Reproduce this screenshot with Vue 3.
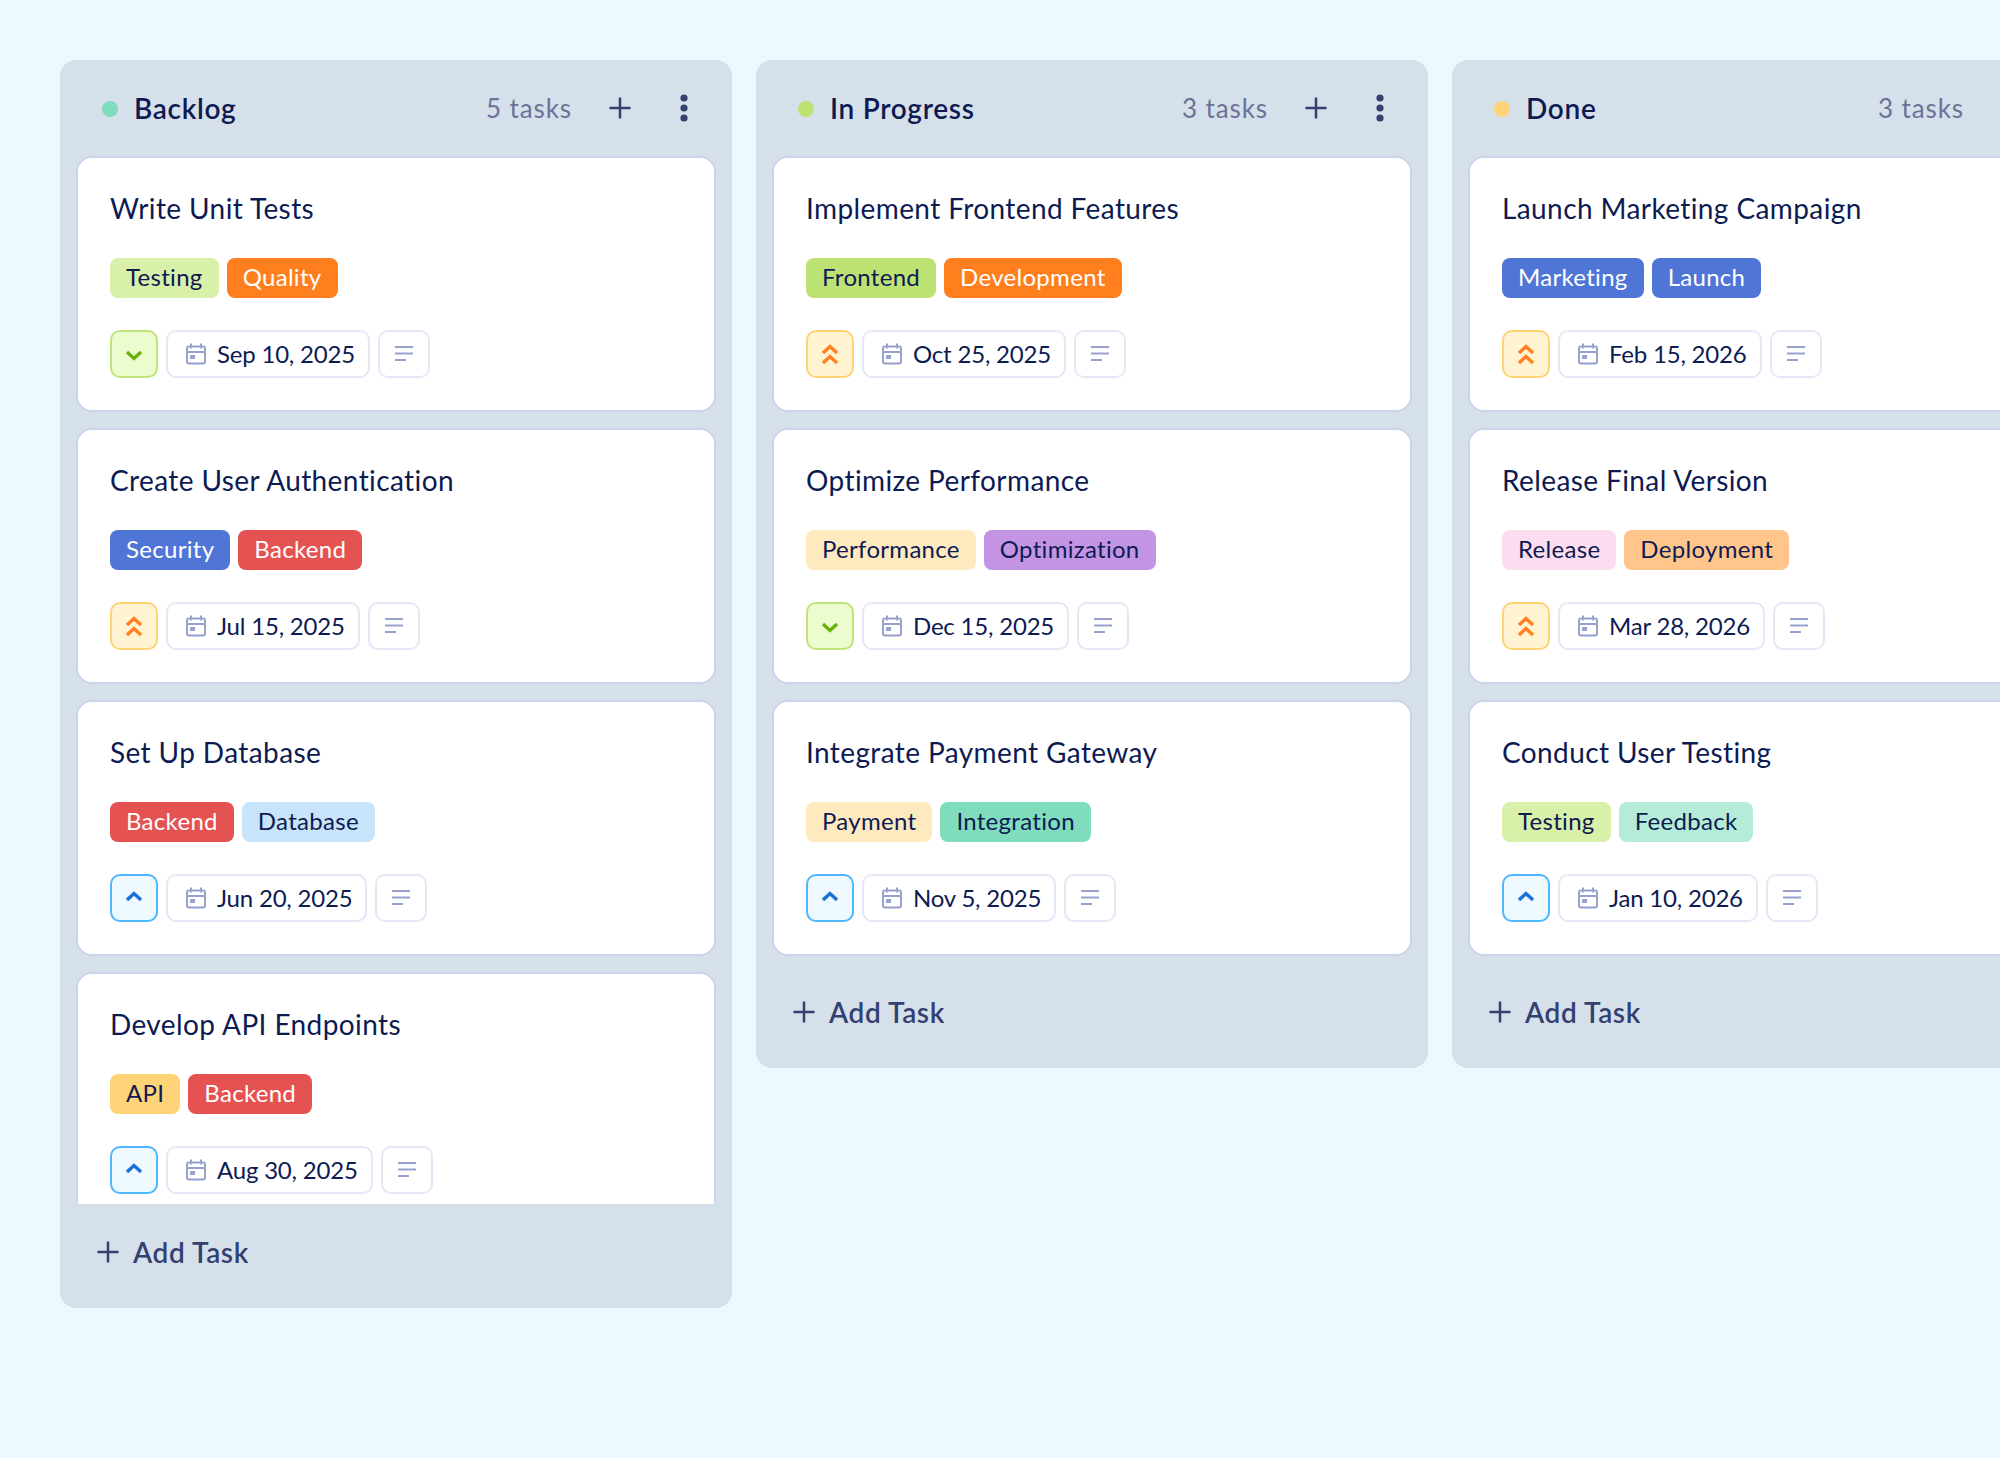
<script setup>
const columns = [
  {
    name: 'Backlog', dot: 'teal', count: '5 tasks',
    cards: [
      { title: 'Write Unit Tests', tags: [['Testing', 'lime'], ['Quality', 'orange']], priority: 'low', date: 'Sep 10, 2025' },
      { title: 'Create User Authentication', tags: [['Security', 'blue'], ['Backend', 'red']], priority: 'high', date: 'Jul 15, 2025' },
      { title: 'Set Up Database', tags: [['Backend', 'red'], ['Database', 'sky']], priority: 'medium', date: 'Jun 20, 2025' },
      { title: 'Develop API Endpoints', tags: [['API', 'amber'], ['Backend', 'red']], priority: 'medium', date: 'Aug 30, 2025' },
    ],
  },
  {
    name: 'In Progress', dot: 'green', count: '3 tasks',
    cards: [
      { title: 'Implement Frontend Features', tags: [['Frontend', 'green'], ['Development', 'orange']], priority: 'high', date: 'Oct 25, 2025' },
      { title: 'Optimize Performance', tags: [['Performance', 'cream'], ['Optimization', 'purple']], priority: 'low', date: 'Dec 15, 2025' },
      { title: 'Integrate Payment Gateway', tags: [['Payment', 'cream'], ['Integration', 'teal']], priority: 'medium', date: 'Nov 5, 2025' },
    ],
  },
  {
    name: 'Done', dot: 'amber', count: '3 tasks',
    cards: [
      { title: 'Launch Marketing Campaign', tags: [['Marketing', 'blue'], ['Launch', 'blue']], priority: 'high', date: 'Feb 15, 2026' },
      { title: 'Release Final Version', tags: [['Release', 'pink'], ['Deployment', 'peach']], priority: 'high', date: 'Mar 28, 2026' },
      { title: 'Conduct User Testing', tags: [['Testing', 'lime'], ['Feedback', 'mint']], priority: 'medium', date: 'Jan 10, 2026' },
    ],
  },
]
</script>

<template>
  <div class="board">
    <section v-for="col in columns" :key="col.name" class="column">
      <header class="head">
        <span class="dot" :class="`dot-${col.dot}`"></span>
        <h2 class="name">{{ col.name }}</h2>
        <span class="count">{{ col.count }}</span>
        <button class="icon-btn">
          <svg width="24" height="24" viewBox="0 0 24 24"><path d="M12 1.5v21M1.5 12h21" fill="none" stroke="#344170" stroke-width="2.5" /></svg>
        </button>
        <button class="icon-btn">
          <svg width="24" height="30" viewBox="0 0 24 30" fill="#344170"><circle cx="12" cy="5" r="3.6" /><circle cx="12" cy="15" r="3.6" /><circle cx="12" cy="25" r="3.6" /></svg>
        </button>
      </header>
      <div class="list">
        <article v-for="card in col.cards" :key="card.title" class="card">
          <h3 class="title">{{ card.title }}</h3>
          <div class="tags">
            <span v-for="tag in card.tags" :key="tag[0]" class="tag" :class="`tag-${tag[1]}`">{{ tag[0] }}</span>
          </div>
          <div class="meta">
            <span class="priority" :class="`p-${card.priority}`">
              <svg width="24" height="24" viewBox="0 0 24 24" fill="none" stroke-width="3.4">
                <path v-if="card.priority === 'low'" d="M5 10l7 6.5 7-6.5" />
                <path v-else-if="card.priority === 'medium'" d="M5 14l7-6.5 7 6.5" />
                <path v-else d="M5 11l7-6.5 7 6.5M5 21l7-6.5 7 6.5" />
              </svg>
            </span>
            <span class="chip date">
              <svg width="24" height="24" viewBox="0 0 24 24" fill="none" stroke="#98a2cf" stroke-width="2">
                <rect x="3" y="4.5" width="18" height="17" rx="2" />
                <path d="M3 10h18M7 1.5v5M17 1.5v5" />
                <rect x="6" y="13" width="5" height="4" fill="#98a2cf" stroke="none" />
              </svg>
              <span class="date-text">{{ card.date }}</span>
            </span>
            <span class="chip note">
              <svg width="24" height="24" viewBox="0 0 24 24" fill="none" stroke="#98a2cf" stroke-width="2">
                <path d="M3 5h18M3 11.5h18M3 18h11" />
              </svg>
            </span>
          </div>
        </article>
      </div>
      <div class="foot">
        <button class="add">
          <svg width="24" height="24" viewBox="0 0 24 24"><path d="M12 1.5v21M1.5 12h21" fill="none" stroke="#344170" stroke-width="2.5" /></svg>
          Add Task
        </button>
      </div>
    </section>
  </div>
</template>

<style>
html, body { margin: 0; background: #eef8ff; overflow: hidden; }
</style>

<style scoped>
.board {
  display: flex;
  align-items: flex-start;
  gap: 24px;
  width: 2000px;
  height: 1458px;
  box-sizing: border-box;
  padding: 60px;
  overflow: hidden;
  font-family: Lato, "Liberation Sans", sans-serif;
  color: #0d1b52;
  font-variant-ligatures: none;
}
.column {
  flex: 0 0 672px;
  max-height: 1248px;
  display: flex;
  flex-direction: column;
  background: #d6e0ea;
  border-radius: 16px;
}
.head {
  flex: none;
  height: 96px;
  box-sizing: border-box;
  padding: 0 24px 0 42px;
  display: flex;
  align-items: center;
  gap: 16px;
}
.dot { width: 16px; height: 16px; border-radius: 50%; margin-top: 2px; }
.dot-teal { background: #7fdcbc; }
.dot-green { background: #bde274; }
.dot-amber { background: #ffd479; }
.name { margin: 0; flex: 1; font-size: 28px; font-weight: 600; letter-spacing: 0.7px; line-height: 36px; }
.count { font-size: 26px; color: #6a7399; margin-right: 8px; letter-spacing: 0.9px; }
.icon-btn {
  width: 48px; height: 48px; padding: 0; border: 0; background: none;
  display: flex; align-items: center; justify-content: center;
}
.list {
  flex: 1;
  min-height: 0;
  overflow: hidden;
  padding: 0 16px 8px;
  display: flex;
  flex-direction: column;
  gap: 16px;
}
.card {
  flex: none;
  box-sizing: border-box;
  height: 256px;
  padding: 29px 32px 32px;
  background: #fff;
  border: 2px solid #cdd5f0;
  border-radius: 16px;
}
.title { margin: 0; font-size: 28px; font-weight: 400; line-height: 42px; letter-spacing: 0.4px; }
.tags { display: flex; gap: 8px; margin-top: 29px; }
.tag {
  height: 40px; padding: 0 16px; border-radius: 8px;
  font-size: 24px; line-height: 38px; letter-spacing: 0.3px;
}
.tag-lime { background: #d8f0a8; }
.tag-green { background: #bde274; }
.tag-orange { background: #ff7f1e; color: #fff; }
.tag-blue { background: #4f75d6; color: #fff; }
.tag-red { background: #e55252; color: #fff; }
.tag-sky { background: #c8e4fa; }
.tag-amber { background: #ffd479; }
.tag-cream { background: #ffe9bf; }
.tag-purple { background: #c394e4; }
.tag-teal { background: #7fdcbc; }
.tag-pink { background: #fcdcef; }
.tag-peach { background: #ffc58a; }
.tag-mint { background: #b5ecd8; }
.meta { display: flex; gap: 8px; margin-top: 32px; }
.priority, .chip {
  box-sizing: border-box; height: 48px; border: 2px solid #e3e7f6; border-radius: 10px;
  display: flex; align-items: center; background: #fff;
}
.priority { width: 48px; justify-content: center; }
.p-low { background: #ecfccf; border-color: #bfe57a; stroke: #6ab30e; }
.p-medium { background: #eef8ff; border-color: #4db8ff; stroke: #1a73d8; }
.p-high { background: #fff3d1; border-color: #ffd479; stroke: #ff8020; }
.date { padding: 0 13px 0 16px; gap: 9px; font-size: 24px; letter-spacing: -0.2px; }
.date-text { margin-top: -2px; }
.note { padding: 0 12px; }
.foot { flex: none; padding: 16px 16px 24px 36px; }
.add {
  height: 64px; padding: 0; border: 0; background: none;
  display: flex; align-items: center; gap: 13px;
  font: 600 28px Lato, "Liberation Sans", sans-serif;
  letter-spacing: 0.6px; color: #344170;
}
</style>
